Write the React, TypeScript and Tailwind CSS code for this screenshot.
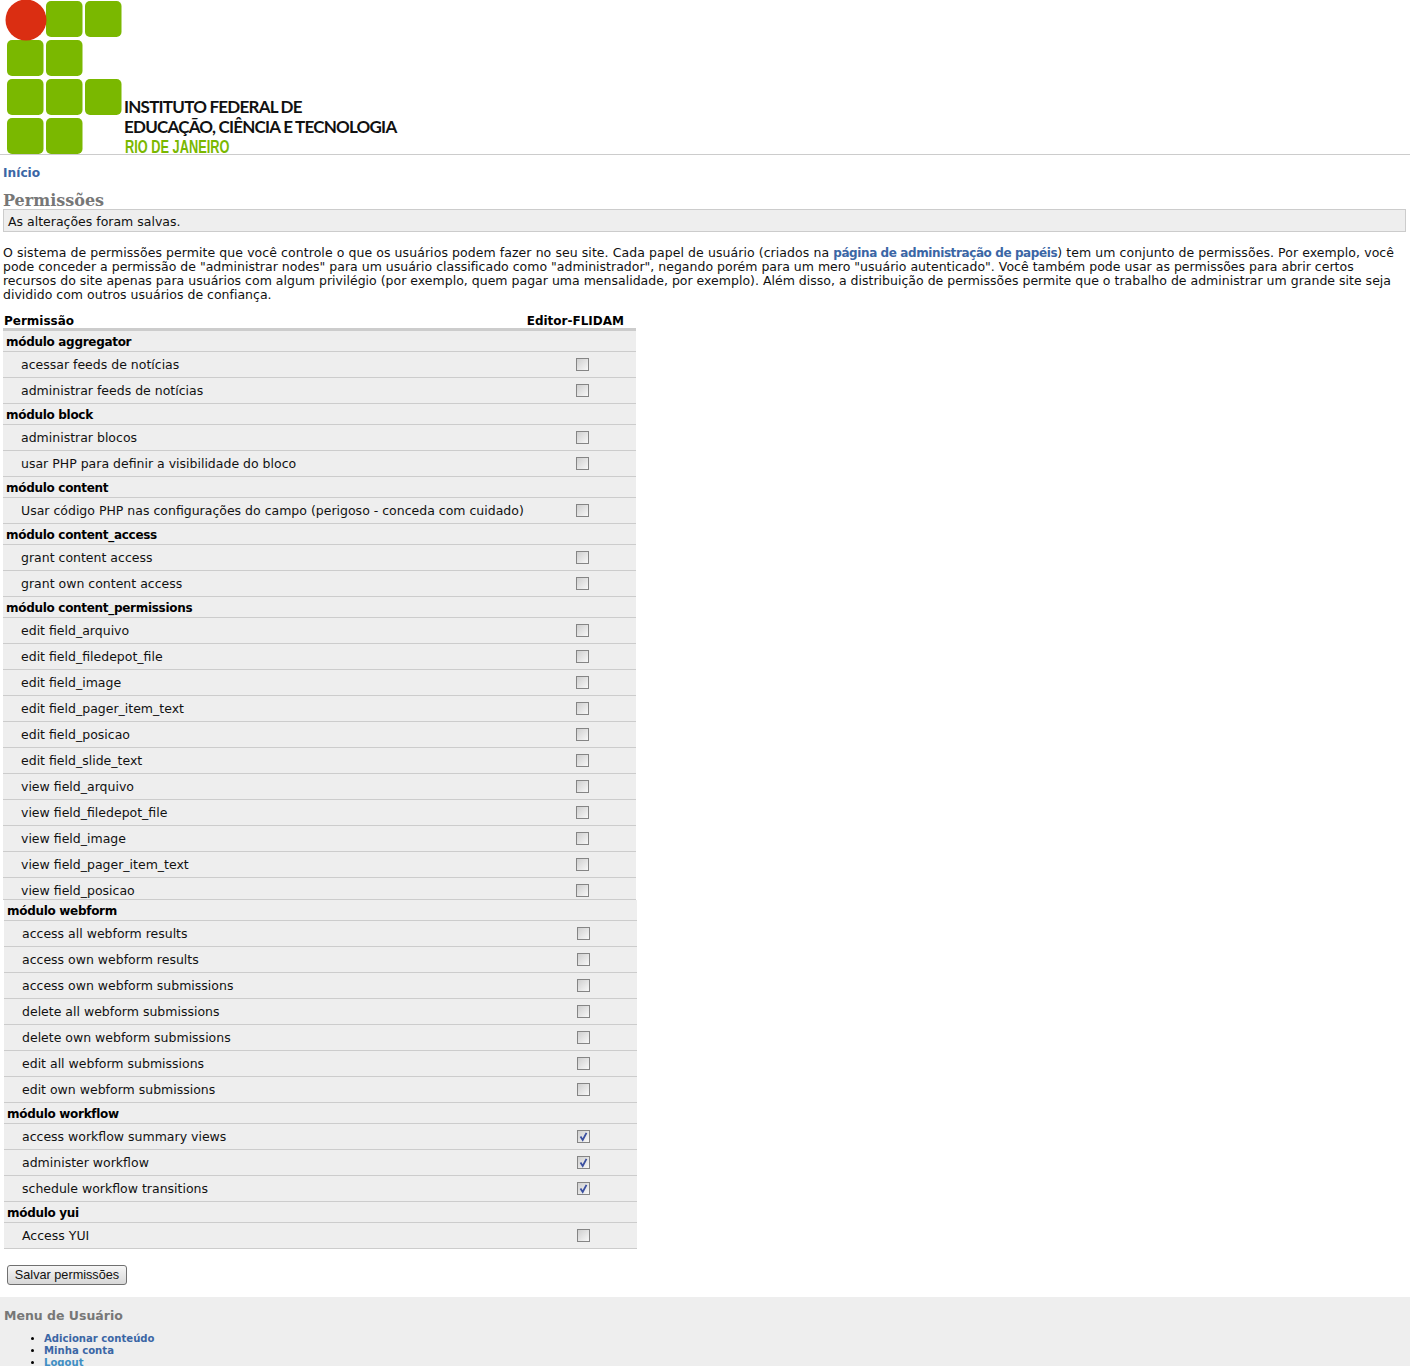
const sans = "font-['DejaVu_Sans','Liberation_Sans',sans-serif]";

type Perm = { label: string; checked?: boolean };
type Group = { name: string; perms: Perm[]; shift?: boolean; lastShort?: boolean };

const groups: Group[] = [
    { name: "módulo aggregator", perms: [{ label: "acessar feeds de notícias" }, { label: "administrar feeds de notícias" }] },
    { name: "módulo block", perms: [{ label: "administrar blocos" }, { label: "usar PHP para definir a visibilidade do bloco" }] },
    { name: "módulo content", perms: [{ label: "Usar código PHP nas configurações do campo (perigoso - conceda com cuidado)" }] },
    { name: "módulo content_access", perms: [{ label: "grant content access" }, { label: "grant own content access" }] },
    {
        name: "módulo content_permissions",
        lastShort: true,
        perms: [
            { label: "edit field_arquivo" },
            { label: "edit field_filedepot_file" },
            { label: "edit field_image" },
            { label: "edit field_pager_item_text" },
            { label: "edit field_posicao" },
            { label: "edit field_slide_text" },
            { label: "view field_arquivo" },
            { label: "view field_filedepot_file" },
            { label: "view field_image" },
            { label: "view field_pager_item_text" },
            { label: "view field_posicao" },
        ],
    },
    {
        name: "módulo webform",
        shift: true,
        perms: [
            { label: "access all webform results" },
            { label: "access own webform results" },
            { label: "access own webform submissions" },
            { label: "delete all webform submissions" },
            { label: "delete own webform submissions" },
            { label: "edit all webform submissions" },
            { label: "edit own webform submissions" },
        ],
    },
    {
        name: "módulo workflow",
        shift: true,
        perms: [
            { label: "access workflow summary views", checked: true },
            { label: "administer workflow", checked: true },
            { label: "schedule workflow transitions", checked: true },
        ],
    },
    { name: "módulo yui", shift: true, perms: [{ label: "Access YUI" }] },
];

function Logo() {
    const squares = [
        [46, 1], [85, 1],
        [7, 40], [46, 40],
        [7, 79], [46, 79], [85, 79],
        [7, 118], [46, 118],
    ];
    return (
        <svg width="123" height="154" viewBox="0 0 123 154" className="shrink-0">
            {squares.map(([x, y]) => (
                <rect key={`${x}-${y}`} x={x} y={y} width="36.5" height="36" rx="5" fill="#7ab800" />
            ))}
            <circle cx="26" cy="20" r="20.5" fill="#da2e12" />
        </svg>
    );
}

function Check({ checked }: { checked?: boolean }) {
    return (
        <span className="relative block h-[13px] w-[13px]">
            <input
                type="checkbox"
                readOnly
                checked={!!checked}
                className="block h-[13px] w-[13px] appearance-none border border-[#858585] bg-gradient-to-br from-[#cfcfcf] to-[#f8f8f8]"
            />
            {checked ? (
                <svg viewBox="0 0 13 13" className="absolute inset-0 h-[13px] w-[13px]">
                    <path d="M3.5 6.5 L5.7 10 L9.5 2.8" fill="none" stroke="#3a4fa0" strokeWidth="1.8" />
                </svg>
            ) : null}
        </span>
    );
}

function PermGroup({ group }: { group: Group }) {
    return (
        <div className={group.shift ? "ml-[4px] w-[633px]" : "ml-[3px] w-[633px]"}>
            <div className="flex h-[21px] items-center border-b border-[#ccc] bg-[#eee] pl-[3px] pt-[1px] text-[12px] font-bold tracking-[-0.3px] text-black">{group.name}</div>
            {group.perms.map((p, i) => {
                const short = group.lastShort && i === group.perms.length - 1;
                return (
                    <div
                        key={p.label}
                        className={`flex items-center justify-between border-b border-[#ccc] bg-[#eee] pl-[18px] pr-[47px] text-[#111] ${short ? "h-[22px] pt-[4px]" : "h-[26px]"}`}
                    >
                        <span>{p.label}</span>
                        <Check checked={p.checked} />
                    </div>
                );
            })}
        </div>
    );
}

export default function App() {
    return (
        <div className={`h-[1366px] w-[1410px] overflow-hidden bg-white text-[12.5px] leading-[14px] text-[#111] ${sans}`}>
            <header className="flex h-[155px] border-b border-[#ccc]">
                <Logo />
                <div className="ml-[1px] flex flex-col pt-[97px] font-['Lato',sans-serif] text-[17px] font-bold leading-[20px] tracking-[-0.77px] text-[#111]">
                    <div>INSTITUTO FEDERAL DE</div>
                    <div>EDUCAÇÃO, CIÊNCIA E TECNOLOGIA</div>
                    <div className="ml-[1px] mt-[2px] origin-left scale-x-[0.71] whitespace-nowrap font-['Liberation_Sans',sans-serif] text-[18px] font-bold leading-[16px] tracking-[0px] text-[#7ab800]">RIO DE JANEIRO</div>
                </div>
            </header>

            <nav className="pl-[3px] pt-[11px] text-[12.2px] font-bold text-[#3b66a5]">Início</nav>
            <h1 className="pl-[3px] pt-[12px] font-['DejaVu_Serif',serif] text-[16px] font-bold leading-[17px] text-[#777]">Permissões</h1>
            <div className="ml-[3px] flex h-[23px] w-[1403px] items-center border border-[#ccc] bg-[#eee] pl-[4px] pt-[2px]">As alterações foram salvas.</div>

            <p className="w-[1404px] pl-[3px] pt-[14px] tracking-[0.01px]">
                <span className="tracking-[0.07px]">
                    O sistema de permissões permite que você controle o que os usuários podem fazer no seu site. Cada papel de usuário (criados na{" "}
                    <a className="text-[12px] font-bold tracking-[-0.4px] text-[#3b66a5]">página de administração de papéis</a>) tem um conjunto de permissões. Por exemplo, você
                </span>{" "}
                pode conceder a permissão de "administrar nodes" para um usuário classificado como "administrador", negando porém para um mero "usuário autenticado". Você também pode usar as permissões para abrir certos recursos do site apenas para usuários com algum privilégio (por exemplo, quem pagar uma mensalidade, por exemplo). Além disso, a distribuição de permissões permite que o trabalho de administrar um grande site seja dividido com outros usuários de confiança.
            </p>

            <div className="ml-[3px] mt-[11px] flex h-[18px] w-[633px] items-center justify-between border-b-[3px] border-[#ccc] pl-[1px] pr-[12px] pt-[1px] text-[12px] font-bold text-black">
                <span>Permissão</span>
                <span>Editor-FLIDAM</span>
            </div>

            {groups.map((g) => (
                <PermGroup key={g.name} group={g} />
            ))}

            <div className="pl-[7px] pt-[16px]">
                <button className="flex h-[20px] w-[120px] items-center justify-center rounded-[3px] border border-[#707070] bg-gradient-to-b from-[#f6f6f6] to-[#d8d8d8] font-['Liberation_Sans',sans-serif] text-[12.7px] text-[#111]">
                    Salvar permissões
                </button>
            </div>

            <footer className="mt-[12px] h-[69px] bg-[#eee] pl-[4px] pt-[11px]">
                <h2 className="text-[12.5px] font-bold leading-[15px] text-[#777]">Menu de Usuário</h2>
                <ul className="mt-[10px] list-disc pl-[40px] text-[10.1px] font-bold leading-[12px] text-[#3b66a5] marker:text-black">
                    <li>Adicionar conteúdo</li>
                    <li>Minha conta</li>
                    <li className="text-[#3f8fc4]">Logout</li>
                </ul>
            </footer>
        </div>
    );
}
